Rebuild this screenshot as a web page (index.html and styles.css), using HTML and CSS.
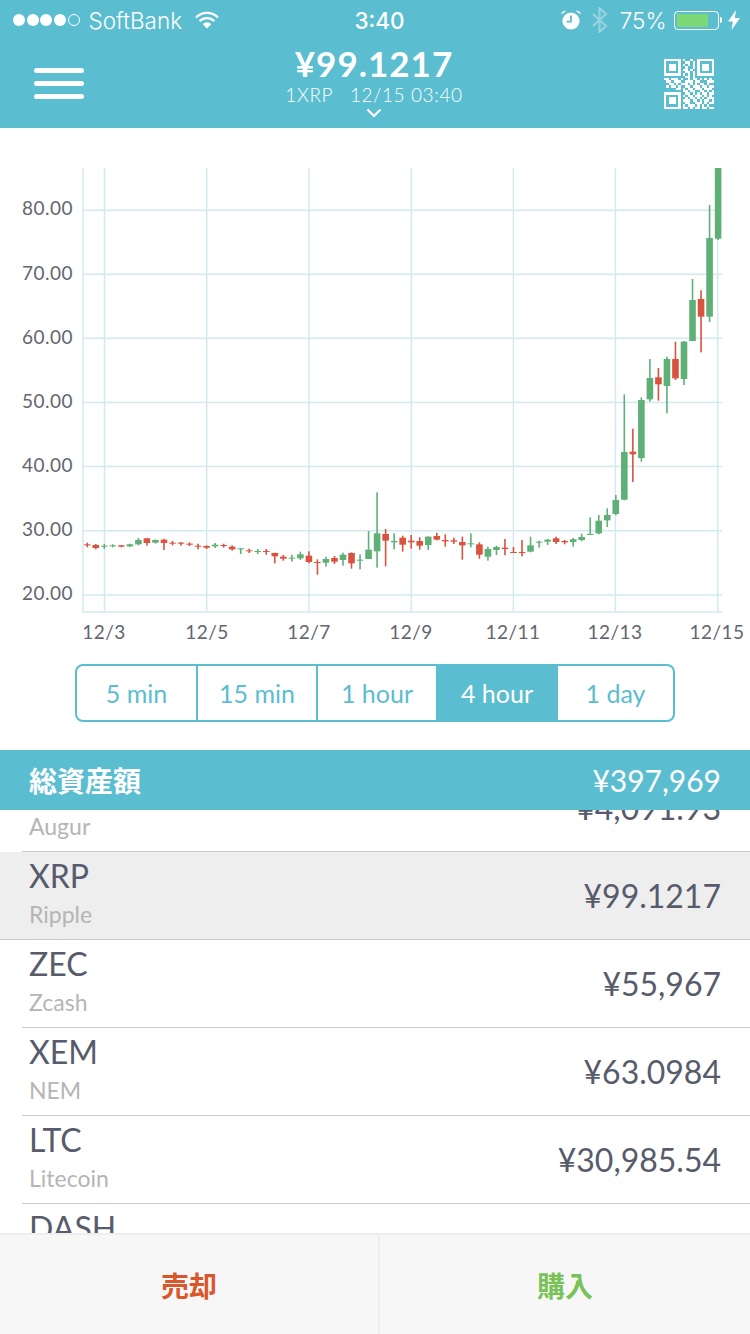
FILE: index.html
```html
<!DOCTYPE html>
<html lang="ja">

<head>
    <meta charset="UTF-8">
    <title>XRP</title>
    <link rel="stylesheet" href="styles.css">
</head>

<body>
    <header class="top">
        <div class="status">
            <div class="status-left">
                <span class="dot"></span><span class="dot"></span><span class="dot"></span><span class="dot"></span><span class="dot empty"></span>
                <span class="carrier">SoftBank</span>
                <svg class="wifi" width="26" height="20" viewBox="0 0 26 20">
                    <path d="M2 7.5a15.5 15.5 0 0 1 22 0M5.6 11.2a10.4 10.4 0 0 1 14.8 0" fill="none" stroke="#fff" stroke-width="2.4"/>
                    <path d="M8.6 14a6.2 6.2 0 0 1 8.8 0L13 18.6z" fill="#fff"/>
                </svg>
            </div>
            <div class="status-time">3:40</div>
            <div class="status-right">
                <svg class="alarm" width="22" height="22" viewBox="0 0 22 22">
                    <circle cx="11" cy="12" r="8.6" fill="#fff"/>
                    <path d="M1.2 5.6a4 4 0 0 1 5-3.6zM20.8 5.6a4 4 0 0 0-5-3.6z" fill="#fff"/>
                    <path d="M11 6.5V12.6H6.6" fill="none" stroke="#5bbdd0" stroke-width="1.8"/>
                </svg>
                <svg class="bluetooth" width="18" height="26" viewBox="0 0 18 26">
                    <path d="M2 7l13 12-6.500 6V1l6.500 6L2 19" fill="none" stroke="#97d3e0" stroke-width="2.200"/>
                </svg>
                <span class="percent">75%</span>
                <div class="battery"><div class="battery-level"></div></div>
                <div class="battery-tip"></div>
                <svg class="bolt" width="12" height="20" viewBox="0 0 12 20">
                    <path d="M8 0L0 11.500h4.800L3.500 20 12 8H6.800z" fill="#fff"/>
                </svg>
            </div>
        </div>
        <div class="nav">
            <div class="menu"><span></span><span></span><span></span></div>
            <div class="ticker">
                <div class="ticker-price">¥99.1217</div>
                <div class="ticker-sub">1XRP&nbsp;&nbsp; 12/15 03:40</div>
                <svg class="chevron" width="16" height="10" viewBox="0 0 16 10">
                    <path d="M1.500 1.500L8 8l6.500-6.500" fill="none" stroke="#fff" stroke-width="2.200"/>
                </svg>
            </div>
            <svg id="qr" class="qr" width="50" height="50" viewBox="0 0 21 21" shape-rendering="crispEdges"></svg>
        </div>
    </header>

    <svg id="chart" class="chart" width="750" height="536" viewBox="0 128 750 536">
        <defs>
            <clipPath id="plot"><rect x="83" y="168" width="640" height="444"/></clipPath>
        </defs>
        <g class="grid">
            <path d="M83 168V612H722"/>
            <path d="M83 210.300H722M83 274.300H722M83 338.300H722M83 402.400H722M83 466.600H722M83 530.800H722M83 595H722"/>
            <path d="M104.500 168V612M206.700 168V612M309 168V612M411.300 168V612M513.400 168V612M615.400 168V612M717.700 168V612"/>
        </g>
        <g class="y-labels">
            <text x="73" y="215">80.00</text>
            <text x="73" y="280">70.00</text>
            <text x="73" y="344">60.00</text>
            <text x="73" y="408">50.00</text>
            <text x="73" y="472">40.00</text>
            <text x="73" y="536">30.00</text>
            <text x="73" y="600">20.00</text>
        </g>
        <g class="x-labels">
            <text x="104" y="639">12/3</text>
            <text x="207" y="639">12/5</text>
            <text x="309" y="639">12/7</text>
            <text x="411" y="639">12/9</text>
            <text x="513" y="639">12/11</text>
            <text x="615" y="639">12/13</text>
            <text x="717" y="639">12/15</text>
        </g>
        <g id="candles" clip-path="url(#plot)"></g>
    </svg>

    <div class="periods">
        <div class="period">5 min</div>
        <div class="period">15 min</div>
        <div class="period">1 hour</div>
        <div class="period active">4 hour</div>
        <div class="period">1 day</div>
    </div>

    <div class="total">
        <span class="total-label">総資産額</span>
        <span class="total-value">¥397,969</span>
    </div>

    <div class="list">
        <ul class="coins">
            <li class="coin"><div><div class="coin-code">REP</div><div class="coin-name">Augur</div></div><div class="coin-price">¥4,091.93</div></li>
            <li class="coin selected"><div><div class="coin-code">XRP</div><div class="coin-name">Ripple</div></div><div class="coin-price">¥99.1217</div></li>
            <li class="coin"><div><div class="coin-code">ZEC</div><div class="coin-name">Zcash</div></div><div class="coin-price">¥55,967</div></li>
            <li class="coin"><div><div class="coin-code">XEM</div><div class="coin-name">NEM</div></div><div class="coin-price">¥63.0984</div></li>
            <li class="coin"><div><div class="coin-code">LTC</div><div class="coin-name">Litecoin</div></div><div class="coin-price">¥30,985.54</div></li>
            <li class="coin"><div><div class="coin-code">DASH</div><div class="coin-name">Dash</div></div></li>
        </ul>
    </div>

    <div class="actions">
        <div class="action sell">売却</div>
        <div class="action buy">購入</div>
    </div>

    <script src="chart.js"></script>
</body>

</html>
```
FILE: styles.css
```css
* {
    box-sizing: border-box;
}

html,
body {
    margin: 0;
    padding: 0;
    height: 1334px;
    overflow: hidden;
}

body {
    display: flex;
    flex-direction: column;
    background-color: #ffffff;
    font-family: Lato, "Noto Sans CJK JP", sans-serif;
    color: #575b6b;
}

/* header */
.top {
    flex: none;
    height: 128px;
    background-color: #5bbdd0;
    color: #ffffff;
}

.status {
    display: grid;
    grid-template-columns: 1fr auto 1fr;
    align-items: center;
    height: 40px;
    padding: 0 10px 0 13px;
    font-family: Inter, sans-serif;
    font-size: 22.500px;
    font-weight: 300;
}

.status-left,
.status-right {
    display: flex;
    align-items: center;
}

.status-right {
    justify-content: flex-end;
}

.dot {
    width: 12px;
    height: 12px;
    margin-right: 1.700px;
    border-radius: 50%;
    background-color: #ffffff;
}

.dot.empty {
    background-color: transparent;
    border: 1px solid #ffffff;
}

.carrier {
    margin-left: 7px;
}

.wifi {
    margin-left: 12px;
}

.status-time {
    padding-left: 6px;
    font-weight: 500;
}

.bluetooth {
    margin-left: 9px;
}

.percent {
    margin-left: 11px;
}

.battery {
    width: 45px;
    height: 19px;
    margin-left: 7px;
    padding: 2px;
    border: 1px solid #ffffff;
    border-radius: 4px;
}

.battery-level {
    width: 31px;
    height: 100%;
    background-color: #7bd877;
}

.battery-tip {
    width: 2.500px;
    height: 6px;
    margin-left: 1px;
    border-radius: 0 2px 2px 0;
    background-color: #ffffff;
}

.bolt {
    margin-left: 6px;
}

.nav {
    display: grid;
    grid-template-columns: 1fr auto 1fr;
    align-items: start;
    height: 88px;
    padding: 0 36px 0 34px;
}

.menu {
    display: flex;
    flex-direction: column;
    gap: 8px;
    width: 50px;
    margin-top: 28px;
}

.menu span {
    height: 5px;
    border-radius: 3px;
    background-color: #ffffff;
}

.ticker {
    display: flex;
    flex-direction: column;
    align-items: center;
}

.ticker-price {
    margin-top: 2px;
    font-size: 35px;
    line-height: 42px;
    font-weight: 700;
    letter-spacing: 1px;
}

.ticker-sub {
    font-size: 19px;
    line-height: 21px;
    font-weight: 300;
    letter-spacing: 0.600px;
}

.chevron {
    margin-top: 3px;
}

.qr {
    justify-self: end;
    margin-top: 19px;
    fill: #ffffff;
}

/* chart */
.chart {
    flex: none;
    display: block;
}

.grid path {
    fill: none;
    stroke: #d3e9ef;
    stroke-width: 1.500;
}

.y-labels text,
.x-labels text {
    font-size: 19px;
    fill: #63666f;
    letter-spacing: 0.500px;
}

.y-labels text {
    text-anchor: end;
}

.x-labels text {
    text-anchor: middle;
}

.candle-up {
    fill: #5fb077;
}

.candle-down {
    fill: #d9533f;
}

/* period switch */
.periods {
    flex: none;
    display: grid;
    grid-template-columns: 119px 120px 120px 120px 1fr;
    width: 600px;
    height: 58px;
    margin: 0 0 28px 75px;
    border: 2px solid #5bbdd0;
    border-radius: 8px;
    overflow: hidden;
}

.period {
    display: flex;
    align-items: center;
    justify-content: center;
    border-left: 2px solid #5bbdd0;
    font-size: 25px;
    color: #5bbdd0;
}

.period:first-child {
    border-left: 0;
}

.period.active {
    background-color: #5bbdd0;
    color: #ffffff;
}

/* total */
.total {
    flex: none;
    display: flex;
    align-items: center;
    justify-content: space-between;
    height: 60px;
    padding: 0 29px;
    background-color: #5bbdd0;
    color: #ffffff;
}

.total-label {
    font-size: 28px;
    font-weight: 700;
}

.total-value {
    font-size: 30px;
}

/* list */
.list {
    flex: 1;
    min-height: 0;
    overflow: hidden;
}

.coins {
    list-style-type: none;
    margin: -46px 0 0;
    padding: 0;
}

.coin {
    position: relative;
    display: flex;
    align-items: center;
    justify-content: space-between;
    height: 88px;
    padding: 0 29px 2px;
}

.coin::after {
    content: "";
    position: absolute;
    left: 22px;
    right: 0;
    bottom: 0;
    height: 1.500px;
    background-color: #c9c9c9;
}

.coin.selected {
    background-color: #eeeeee;
}

.coin.selected::after {
    left: 0;
}

.coin-code {
    font-size: 32px;
    line-height: 38px;
}

.coin-name {
    font-size: 23px;
    line-height: 38px;
    color: #b5b5b5;
}

.coin-price {
    font-size: 32px;
}

/* buttons */
.actions {
    flex: none;
    display: grid;
    grid-template-columns: 380px 1fr;
    height: 101px;
    background-color: #f7f7f7;
    border-top: 2px solid #eeeeee;
    font-size: 28px;
    font-weight: 700;
}

.action {
    display: flex;
    align-items: center;
    justify-content: center;
}

.sell {
    color: #d9572c;
    border-right: 2px solid #eeeeee;
}

.buy {
    color: #78c257;
}
```
FILE: chart.js
```js
// [color, wick top, wick bottom, body top, body bottom]
// y values are in thirds of a pixel, counted from y=490 on the page
var candles = [
    ['r',158,172,163,166], ['r',162,178,165,174], ['g',162,177,167,170], ['g',163,172,166,169],
    ['r',165,172,166,170], ['g',161,171,163,169], ['g',144,166,150,163], ['r',144,167,145,159],
    ['g',148,161,150,158], ['r',146,180,149,159], ['r',153,166,158,161], ['r',156,167,158,161],
    ['r',157,168,161,164], ['r',161,178,167,170], ['r',166,177,168,173], ['g',159,174,164,169],
    ['r',161,173,165,168], ['r',166,182,170,178], ['g',174,192,175,178], ['r',176,189,181,184],
    ['g',177,192,183,186], ['r',177,194,183,186], ['r',188,220,189,199], ['r',195,212,200,206],
    ['g',194,215,203,206], ['g',185,210,193,205], ['r',184,220,197,216], ['r',208,254,216,219],
    ['g',200,230,207,218], ['r',198,222,204,215], ['g',188,227,194,210], ['r',187,236,189,220],
    ['g',193,238,209,212], ['g',123,207,179,207], ['g',7,233,130,184], ['r',117,229,132,152],
    ['g',130,178,153,157], ['r',137,185,143,164], ['r',135,176,152,157], ['r',142,179,153,167],
    ['g',139,180,140,165], ['r',128,151,138,149], ['r',133,170,150,154], ['r',143,162,151,155],
    ['r',140,209,156,166], ['g',130,172,160,163], ['r',157,206,163,194], ['g',170,212,177,200],
    ['g',167,195,171,180], ['r',147,196,173,177], ['r',171,188,186,188], ['r',150,199,186,189],
    ['g',140,187,166,185], ['g',152,173,155,158], ['g',147,165,149,155], ['r',140,162,145,156],
    ['r',150,163,153,157], ['g',144,170,148,156], ['g',131,154,141,150], ['g',82,135,132,135],
    ['g',75,133,92,130], ['g',55,111,75,91], ['g',15,76,30,72], ['g',-287,31,-114,29],
    ['r',-184,-24,-115,-107], ['g',-278,-85,-270,-96], ['g',-393,-265,-336,-272], ['r',-366,-268,-338,-317],
    ['g',-400,-230,-393,-312], ['r',-445,-330,-393,-335], ['g',-447,-315,-445,-333], ['g',-633,-447,-570,-447],
    ['r',-599,-413,-573,-520], ['g',-855,-504,-756,-520], ['g',-1000,-750,-1000,-754]
];

var SVG_NS = 'http://www.w3.org/2000/svg';
var FIRST_X = 104.3 - 2 * 8.525;
var STEP = 8.525;

function addRect(parent, x, y, w, h, cls) {
    var rect = document.createElementNS(SVG_NS, 'rect');
    rect.setAttribute('x', x);
    rect.setAttribute('y', y);
    rect.setAttribute('width', w);
    rect.setAttribute('height', h);
    if (cls) {
        rect.setAttribute('class', cls);
    }
    parent.appendChild(rect);
}

var group = document.getElementById('candles');
candles.forEach(function (c, i) {
    var cls = c[0] === 'g' ? 'candle-up' : 'candle-down';
    var x = FIRST_X + i * STEP;
    addRect(group, x - 0.8, 490 + c[1] / 3, 1.6, (c[2] - c[1]) / 3, cls);
    addRect(group, x - 3.3, 490 + c[3] / 3, 6.6, Math.max(c[4] - c[3], 3) / 3, cls);
});

// QR icon in the header
var qrRows = [
    '111111101001001111111',
    '100000100110101000001',
    '101110101010101011101',
    '101110100100101011101',
    '101110101101001011101',
    '100000100110101000001',
    '111111101010101111111',
    '000000000110100000000',
    '110111010010110101010',
    '011011100111011000111',
    '001101011101010110100',
    '010110100110111011011',
    '000001101011011101110',
    '000000001101100110101',
    '111111100110101011011',
    '100000101011011101010',
    '101110100101101010111',
    '101110101110110101101',
    '101110100110011101011',
    '100000101011101010100',
    '111111101101011011011'
];

var qr = document.getElementById('qr');
qrRows.forEach(function (row, y) {
    row.split('').forEach(function (cell, x) {
        if (cell === '1') {
            addRect(qr, x, y, 1, 1);
        }
    });
});
```
